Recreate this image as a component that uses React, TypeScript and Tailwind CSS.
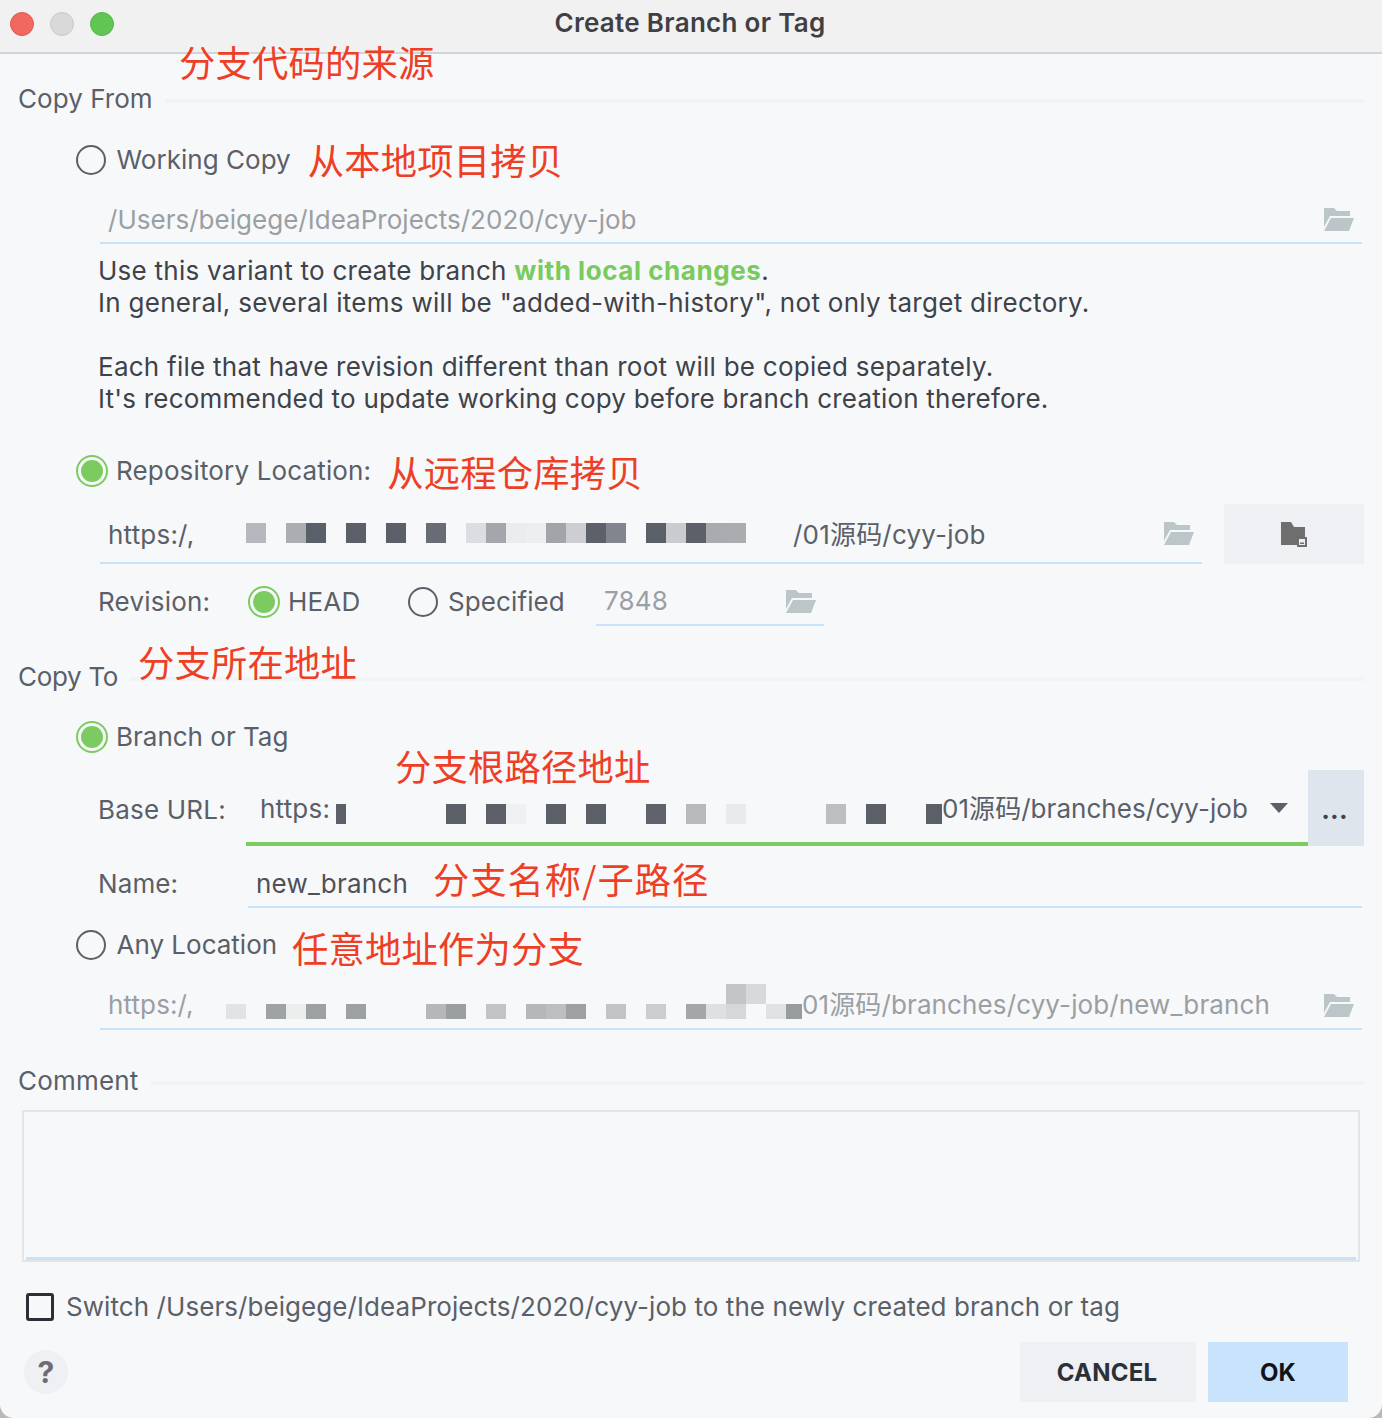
const redText = "text-[36.3px] leading-[44px] text-[#ee3f26] whitespace-nowrap font-['Noto_Sans_CJK_SC',sans-serif]";

function FolderOpen({ className = "" }: { className?: string }) {
  return (
    <svg width="30" height="23" viewBox="0 0 30 23" className={className}>
      <path d="M0 0h10l3 3h13v5H6L0 19z" fill="#bcc6c9" />
      <path d="M7 10h23l-5 13H0z" fill="#bcc6c9" />
    </svg>
  );
}

function NewFolder() {
  return (
    <svg width="26" height="25" viewBox="0 0 26 25">
      <path d="M0 0h10l3 5h11v10h-8v8H0z" fill="#6e6e6e" />
      <path d="M16 15h10v10H16z" fill="#6e6e6e" />
      <path d="M18 17h6v6h-6z" fill="#eef0f4" />
      <path d="M19 20.500h4v1.500h-4z" fill="#6e6e6e" />
    </svg>
  );
}

function Radio({ on = false }: { on?: boolean }) {
  return on ? (
    <span className="flex h-8 w-8 shrink-0 items-center justify-center rounded-full border-2 border-[#7bcb60] bg-[#f7f8fa]">
      <span className="h-[22px] w-[22px] rounded-full bg-[#7bcb60]" />
    </span>
  ) : (
    <span className="h-[30px] w-[30px] shrink-0 rounded-full border-2 border-[#5b6069]" />
  );
}

function Section({ title, tracking }: { title: string; tracking: string }) {
  return (
    <div className="flex h-[38px] items-center pl-[18px] pr-[18px]">
      <span className={`whitespace-nowrap ${tracking}`}>{title}</span>
      <span className="ml-3 mt-[3px] h-1 flex-1 bg-[#f2f3f4]" />
    </div>
  );
}

function Mosaic({ cells, className = "", cellClass = "h-5" }: { cells: [number, string][]; className?: string; cellClass?: string }) {
  return (
    <span className={`relative block shrink-0 overflow-hidden ${cellClass} ${className}`}>
      {cells.map(([x, c]) => (
        <span key={x} className={`absolute top-0 w-5 ${cellClass}`} style={{ left: x, backgroundColor: c }} />
      ))}
    </span>
  );
}

const repoCells: [number, string][] = [
  [0, "#b6b8bd"], [40, "#abadb1"], [60, "#5a6069"], [100, "#5b6068"], [140, "#5b6068"], [180, "#686c74"],
  [220, "#dcdde0"], [240, "#a4a6ab"], [260, "#ebecee"], [280, "#edeef0"], [300, "#a2a4a9"], [320, "#cdced2"],
  [340, "#5b6069"], [360, "#82858d"], [400, "#5b6068"], [420, "#c9cbce"], [440, "#5b6069"], [460, "#a9abaf"], [480, "#aaacb0"],
];
const baseCells: [number, string][] = [
  [100, "#5b6068"], [140, "#5b6068"], [160, "#eff0f1"], [200, "#5b6068"], [240, "#5b6068"], [300, "#5f646c"],
  [340, "#b7b9bd"], [380, "#e9eaec"], [480, "#bcbec2"], [520, "#5b6068"], [580, "#5b6068"],
];
const anyCells: [number, string][] = [
  [0, "#e1e3e4"], [40, "#9ea3a5"], [60, "#eceded"], [80, "#9ca1a3"], [120, "#9ca1a3"], [200, "#b5b8ba"], [220, "#9a9fa1"],
  [260, "#c1c4c6"], [300, "#b5b8ba"], [320, "#bcbfc1"], [340, "#9da1a3"], [380, "#c1c4c6"], [420, "#cbcdcf"],
  [460, "#a3a7a9"], [480, "#dee0e1"], [500, "#d5d7d8"], [540, "#e1e2e3"], [560, "#979c9e"],
];
const anyTop: [number, string][] = [[500, "#c3c6c8"], [520, "#d7d9da"]];

export default function App() {
  return (
    <div className="min-h-[1418px] bg-[#b9b9b9]">
      <div className="relative h-[1418px] overflow-hidden rounded-b-[14px] bg-[#f7f8fa] font-['Inter','Noto_Sans_CJK_SC',sans-serif] text-[26px] leading-8 tracking-[0.2px] text-[#5a5f68]">
        {/* Title bar */}
        <div className="relative flex h-[54px] items-center justify-center border-b-2 border-[#d4d4d4] bg-[#f1f1f1] text-[26px] font-semibold tracking-[0.3px] text-[#3f4043]">
          <div className="absolute left-[10px] top-3 flex gap-[16px]">
            <span className="h-6 w-6 rounded-full border border-[#e2584e] bg-[#f0685e]" />
            <span className="h-6 w-6 rounded-full border border-[#c8c8c8] bg-[#d9d9d9]" />
            <span className="h-6 w-6 rounded-full border border-[#55b84a] bg-[#61c554]" />
          </div>
          <span className="mb-[6px] mr-[2px]">Create Branch or Tag</span>
        </div>

        <div className="relative mt-[26px]">
          <Section title="Copy From" tracking="tracking-[0.05px]" />
          <span className={`absolute left-[179px] top-[-41px] ${redText}`}>分支代码的来源</span>
        </div>

        {/* Working copy */}
        <div className="mt-[22px] flex h-10 items-center pl-[76px]">
          <Radio />
          <span className="ml-[10.500px] mb-[1px] tracking-[0.03px]">Working Copy</span>
          <span className={`ml-[17px] mb-[2px] ${redText}`}>从本地项目拷贝</span>
        </div>
        <div className="ml-[100px] mr-5 mt-4 flex h-12 items-center justify-between border-b-2 border-[#c9e3fd] pl-2 pr-[8px] tracking-[0.02px] text-[#9a9fa3]">
          <span className="mt-[2px]">/Users/beigege/IdeaProjects/2020/cyy-job</span>
          <FolderOpen />
        </div>
        <div className="ml-[98px] mt-[11px] tracking-[0.26px] text-[#3e4249]">
          <p>
            Use this variant to create branch <span className="font-bold tracking-[0.55px] text-[#78cb5c]">with local changes</span>.
          </p>
          <p className="tracking-[0.29px]">In general, several items will be "added-with-history", not only target directory.</p>
          <p className="mt-8">Each file that have revision different than root will be copied separately.</p>
          <p className="tracking-[0.21px]">It's recommended to update working copy before branch creation therefore.</p>
        </div>

        {/* Repository */}
        <div className="mt-[36px] flex h-10 items-center pl-[76px]">
          <Radio on />
          <span className="ml-2 tracking-[0.15px]">Repository Location:</span>
          <span className={`ml-[16px] ${redText}`}>从远程仓库拷贝</span>
        </div>
        <div className="mt-[13px] flex h-[60px] pl-[100px] pr-[18px]">
          <div className="flex flex-1 items-center border-b-2 border-[#c9e3fd] pl-2 pr-2">
            <span className="mt-1 w-[138px] shrink-0">https:/,</span>
            <Mosaic cells={repoCells} className="w-[547px]" />
            <span className="mt-1">/01源码/cyy-job</span>
            <FolderOpen className="ml-auto" />
          </div>
          <div className="ml-[22px] flex w-[140px] items-center justify-center bg-[#eef0f4]">
            <NewFolder />
          </div>
        </div>
        <div className="mt-[14px] flex h-12 items-center pl-[98px]">
          <span className="w-[150px]">Revision:</span>
          <Radio on />
          <span className="ml-2 w-[120px]">HEAD</span>
          <Radio />
          <span className="ml-[10px] w-[148px] tracking-[0.1px]">Specified</span>
          <div className="flex h-12 w-[228px] items-center justify-between border-b-2 border-[#c9e3fd] pl-2 pr-2 text-[#9a9fa3]">
            <span>7848</span>
            <FolderOpen />
          </div>
        </div>

        {/* Copy to */}
        <div className="relative mt-8">
          <Section title="Copy To" tracking="tracking-[-0.3px]" />
          <span className={`absolute left-[138px] top-[-19px] ${redText}`}>分支所在地址</span>
        </div>
        <div className="mt-[21px] flex h-10 items-center pl-[76px]">
          <Radio on />
          <span className="ml-2 mb-[1px] tracking-[0px]">Branch or Tag</span>
        </div>
        <div className="relative mt-[13px] flex h-[76px] pl-[98px] pr-[18px]">
          <span className={`absolute left-[395px] top-[-27px] z-10 ${redText}`}>分支根路径地址</span>
          <span className="mt-6 w-[148px] shrink-0">Base URL:</span>
          <div className="flex flex-1 items-center border-b-4 border-[#7bcb60] pl-[14px] pr-5">
            <span className="mt-[6px] w-[76px] shrink-0">https:</span>
            <span className="mt-4 h-5 w-[10px] shrink-0 bg-[#5b6068]" />
            <Mosaic cells={baseCells} className="mt-4 w-[596px]" />
            <span className="mt-[6px] tracking-[0.05px]">01源码/branches/cyy-job</span>
            <svg width="18" height="10" viewBox="0 0 18 10" className="ml-auto mt-1">
              <path d="M0 0h18l-9 10z" fill="#5a5f68" />
            </svg>
          </div>
          <div className="flex w-14 items-center justify-center bg-[#dfe5ec] pr-[3px] pt-1 font-bold leading-none text-[#3e4249]">...</div>
        </div>
        <div className="mt-[14px] flex h-12 pl-[98px] pr-5">
          <span className="mt-2 w-[150px] shrink-0 tracking-[0.1px]">Name:</span>
          <div className="flex flex-1 items-center border-b-2 border-[#c9e3fd] pl-2">
            <span className="mt-[2px] text-[#4d5159]">new_branch</span>
            <span className={`mb-[10px] ml-[25px] tracking-[1px] ${redText}`}>分支名称/子路径</span>
          </div>
        </div>

        {/* Any location */}
        <div className="mt-[17px] flex h-10 items-center pl-[76px]">
          <Radio />
          <span className="ml-[10.500px] mb-[1px] tracking-[0px]">Any Location</span>
          <span className={`ml-[15px] mt-1 ${redText}`}>任意地址作为分支</span>
        </div>
        <div className="ml-[100px] mr-5 mt-[17px] flex h-12 items-center border-b-2 border-[#c9e3fd] pl-2 pr-2 tracking-[0.12px] text-[#9a9fa3]">
          <span className="w-[118px] shrink-0">https:/,</span>
          <span className="relative mt-[13px] shrink-0">
            <span className="absolute bottom-full left-0">
              <Mosaic cells={anyTop} className="w-[576px]" />
            </span>
            <Mosaic cells={anyCells} className="w-[576px]" cellClass="h-[15px]" />
          </span>
          <span>01源码/branches/cyy-job/new_branch</span>
          <FolderOpen className="ml-auto" />
        </div>

        {/* Comment */}
        <div className="mt-8">
          <Section title="Comment" tracking="tracking-[0.2px]" />
        </div>
        <div className="ml-[22px] mr-[22px] mt-[10px] h-[152px] border-2 border-[#e3e5e8] pr-[2px] pl-[2px]">
          <div className="h-full border-b-[3px] border-[#cbe3f8]" />
        </div>

        {/* Checkbox */}
        <div className="mt-[25px] flex h-10 items-center pl-[26px]">
          <span className="h-7 w-7 shrink-0 rounded-[3px] border-[3px] border-[#2b2f36]" />
          <span className="ml-3 tracking-[0.07px]">Switch /Users/beigege/IdeaProjects/2020/cyy-job to the newly created branch or tag</span>
        </div>

        {/* Footer */}
        <div className="mt-[15px] flex h-[60px] items-center pl-6 pr-[34px]">
          <span className="flex h-11 w-11 items-center justify-center rounded-full bg-[#eef0f4] text-[30px] font-bold text-[#6e6e6e]">?</span>
          <button className="ml-auto h-[60px] w-[176px] bg-[#eef0f4] pt-[2px] pr-[2px] text-[24px] font-bold text-[#2b2f36]">CANCEL</button>
          <button className="ml-3 h-[60px] w-[140px] bg-[#c9e3fd] pt-[2px] text-[24px] font-bold text-[#111318]">OK</button>
        </div>
      </div>
    </div>
  );
}
